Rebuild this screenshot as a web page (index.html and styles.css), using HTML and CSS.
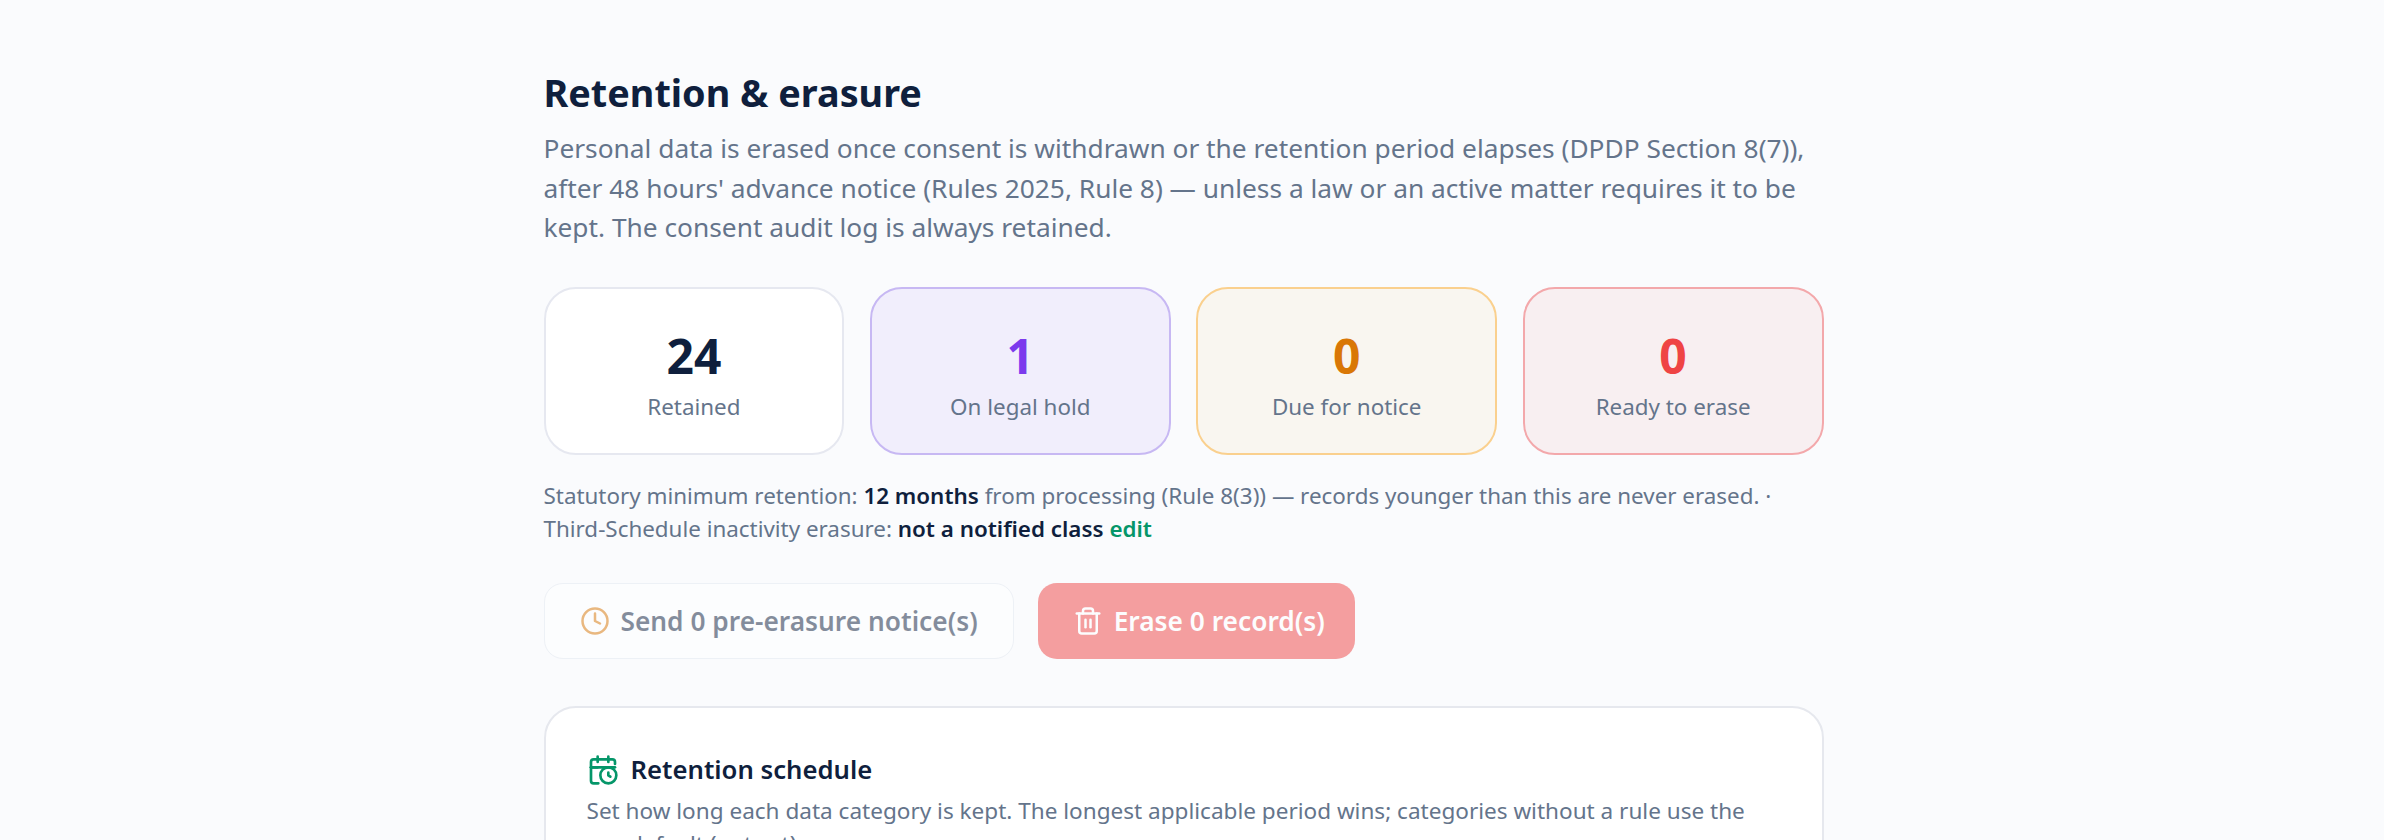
FILE: index.html
```html
<!DOCTYPE html>
<html lang="en">
<head>
    <meta charset="UTF-8">
    <title>Retention &amp; erasure</title>
    <link rel="stylesheet" href="styles.css">
</head>
<body>
    <main class="page">
        <h1>Retention &amp; erasure</h1>
        <p class="intro">Personal data is erased once consent is withdrawn or the retention period elapses (DPDP Section 8(7)), after 48 hours' advance notice (Rules 2025, Rule 8) — unless a law or an active matter requires it to be kept. The consent audit log is always retained.</p>

        <div class="stats">
            <div class="stat">
                <div class="stat-value">24</div>
                <div class="stat-label">Retained</div>
            </div>
            <div class="stat stat-hold">
                <div class="stat-value">1</div>
                <div class="stat-label">On legal hold</div>
            </div>
            <div class="stat stat-due">
                <div class="stat-value">0</div>
                <div class="stat-label">Due for notice</div>
            </div>
            <div class="stat stat-erase">
                <div class="stat-value">0</div>
                <div class="stat-label">Ready to erase</div>
            </div>
        </div>

        <p class="note">Statutory minimum retention: <strong>12 months</strong> from processing (Rule 8(3)) — records younger than this are never erased. · Third-Schedule inactivity erasure: <strong>not a notified class</strong> <a href="#">edit</a></p>

        <div class="actions">
            <button class="btn btn-notice" disabled>
                <svg class="icon" viewBox="0 0 24 24"><circle cx="12" cy="12" r="10"/><path d="M12 6v6l4 2"/></svg>
                Send 0 pre-erasure notice(s)
            </button>
            <button class="btn btn-erase" disabled>
                <svg class="icon" viewBox="0 0 24 24"><path d="M3 6h18"/><path d="M19 6v14a2 2 0 0 1-2 2H7a2 2 0 0 1-2-2V6"/><path d="M8 6V4a2 2 0 0 1 2-2h4a2 2 0 0 1 2 2v2"/><path d="M10 11v6"/><path d="M14 11v6"/></svg>
                Erase 0 record(s)
            </button>
        </div>

        <section class="panel">
            <h2>
                <svg class="icon" viewBox="0 0 24 24"><path d="M16 2v4"/><path d="M8 2v4"/><path d="M21 7.5V6a2 2 0 0 0-2-2H5a2 2 0 0 0-2 2v14a2 2 0 0 0 2 2h3.5"/><path d="M3 10h5"/><path d="M3 10h18"/><circle cx="16" cy="16" r="6"/><path d="M16 14v2l1.5 1"/></svg>
                Retention schedule
            </h2>
            <p>Set how long each data category is kept. The longest applicable period wins; categories without a rule use the org default (not set).</p>
        </section>
    </main>
</body>
</html>
```

FILE: styles.css
```css
* {
    box-sizing: border-box;
}

html, body {
    height: 840px;
    overflow: hidden;
}

body {
    margin: 0;
    padding: 0 17px 0 0;
    background-color: #fafbfd;
    color: #0f1f3d;
    font-family: 'Noto Sans', 'Open Sans', sans-serif;
}

.page {
    width: 1280px;
    margin: 0 auto;
    padding-top: 67px;
}

h1 {
    margin: 0 0 11px;
    font-size: 37.8px;
    line-height: 51px;
    font-weight: 700;
}

.intro {
    margin: 0 0 39px;
    color: #64748b;
    font-size: 26.3px;
    line-height: 39.7px;
}

.stats {
    display: grid;
    grid-template-columns: repeat(4, 1fr);
    gap: 25.6px;
}

.stat {
    height: 168px;
    padding-top: 38px;
    background-color: #fff;
    border: 2px solid #e6e8f0;
    border-radius: 32px;
    text-align: center;
}

.stat-value {
    font-size: 48px;
    line-height: 58px;
    font-weight: 700;
}

.stat-label {
    margin-top: 6px;
    color: #64748b;
    font-size: 22.4px;
    line-height: 32px;
}

.stat-hold {
    background-color: #f1eefc;
    border-color: #c7b8f3;
}

.stat-hold .stat-value {
    color: #7c3aed;
}

.stat-due {
    background-color: #f9f6f0;
    border-color: #fad08e;
}

.stat-due .stat-value {
    color: #d97706;
}

.stat-erase {
    background-color: #f8eff1;
    border-color: #f3a8ab;
}

.stat-erase .stat-value {
    color: #ef4444;
}

.note {
    margin: 25px 0 0;
    color: #64748b;
    font-size: 22.4px;
    line-height: 32.5px;
}

.note strong {
    color: #0f1f3d;
    font-weight: 600;
}

.note a {
    color: #059669;
    font-weight: 600;
    text-decoration: none;
}

.actions {
    display: flex;
    align-items: center;
    gap: 24px;
    margin-top: 38px;
}

.btn {
    display: flex;
    align-items: center;
    gap: 11px;
    padding: 0 35px;
    height: 76px;
    border: 0;
    border-radius: 19px;
    font-family: inherit;
    font-size: 26.3px;
    font-weight: 600;
    opacity: 0.5;
}

.icon {
    flex: none;
    width: 30px;
    height: 30px;
    fill: none;
    stroke: currentColor;
    stroke-width: 2;
    stroke-linecap: round;
    stroke-linejoin: round;
}

.btn-notice {
    background-color: #fff;
    border: 1.6px solid #e2e8f0;
    color: #0f1f3d;
}

.btn-notice .icon {
    color: #d97706;
}

.btn-erase {
    padding-right: 30px;
    background-color: #ef4444;
    color: #fff;
}

.panel {
    margin-top: 47px;
    height: 400px;
    padding: 44px 41px 0;
    background-color: #fff;
    border: 2px solid #e6e8ee;
    border-radius: 32px;
}

.panel h2 {
    display: flex;
    align-items: center;
    gap: 12px;
    margin: 0;
    font-size: 25.7px;
    line-height: 36px;
    font-weight: 600;
}

.panel h2 .icon {
    width: 32px;
    height: 32px;
    color: #059669;
}

.panel p {
    margin: 6px 0 0;
    color: #64748b;
    font-size: 22.55px;
    line-height: 33px;
}
```
